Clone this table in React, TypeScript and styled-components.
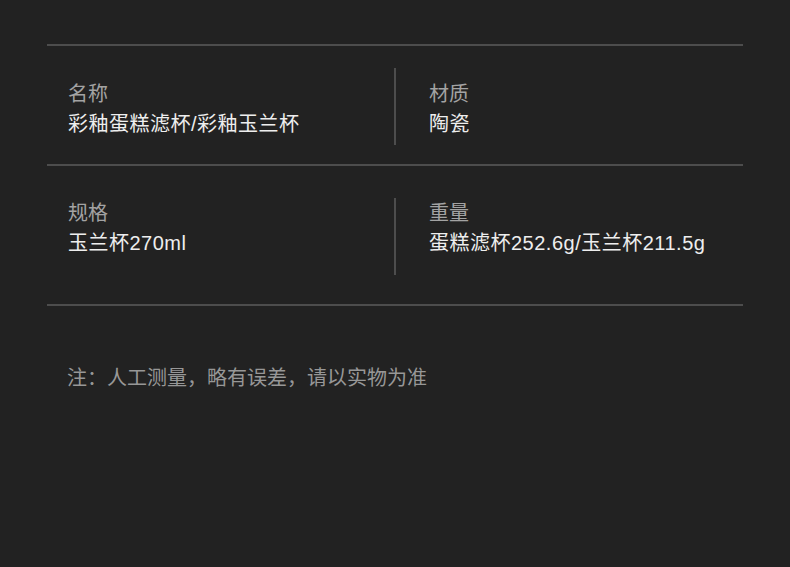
import React from "react";
import styled, { createGlobalStyle } from "styled-components";

interface SpecItem {
  label: string;
  value: string;
}

const rows: { items: SpecItem[]; top: number; bottom: number; inset: number }[] = [
  {
    items: [
      { label: "名称", value: "彩釉蛋糕滤杯/彩釉玉兰杯" },
      { label: "材质", value: "陶瓷" },
    ],
    top: 22,
    bottom: 19,
    inset: 11,
  },
  {
    items: [
      { label: "规格", value: "玉兰杯270ml" },
      { label: "重量", value: "蛋糕滤杯252.6g/玉兰杯211.5g" },
    ],
    top: 32,
    bottom: 29,
    inset: 0,
  },
];

export default function App() {
  return (
    <>
      <GlobalStyle />
      <StPage>
        <StTable>
          {rows.map((row, i) => (
            <StRow key={i} $top={row.top} $bottom={row.bottom}>
              {row.items.map((item, j) => (
                <StCell key={item.label} $divided={j > 0} $inset={row.inset}>
                  <StLabel>{item.label}</StLabel>
                  <StValue>{item.value}</StValue>
                </StCell>
              ))}
            </StRow>
          ))}
        </StTable>
        <StNote>注：人工测量，略有误差，请以实物为准</StNote>
      </StPage>
    </>
  );
}

const GlobalStyle = createGlobalStyle`
  html, body {
    margin: 0;
    padding: 0;
    background: #222222;
  }
  body {
    font-family: "Liberation Sans", "Noto Sans CJK SC", sans-serif;
  }
`;

const StPage = styled.div`
  width: 790px;
  height: 567px;
  box-sizing: border-box;
  padding: 44px 47px 0;
  background: #222222;
`;

const StTable = styled.div`
  border-top: 2px solid #4d4d4d;
`;

const StRow = styled.div<{ $top: number; $bottom: number }>`
  display: grid;
  grid-template-columns: 347px 1fr;
  padding: ${(p) => p.$top}px 0 ${(p) => p.$bottom}px;
  border-bottom: 2px solid #4d4d4d;
`;

const StCell = styled.div<{ $divided: boolean; $inset: number }>`
  display: flex;
  flex-direction: column;
  height: 77px;
  box-sizing: border-box;
  padding: ${(p) => p.$inset}px 0 0 ${(p) => (p.$divided ? 33 : 21)}px;
  border-left: ${(p) => (p.$divided ? "2px solid #4d4d4d" : "none")};
`;

const StLabel = styled.div`
  font-size: 20px;
  line-height: 30px;
  color: #a3a3a3;
  white-space: nowrap;
`;

const StValue = styled.div`
  font-size: 20px;
  line-height: 30px;
  letter-spacing: 0.5px;
  color: #eeeeee;
  white-space: nowrap;
`;

const StNote = styled.p`
  margin: 57px 0 0 20px;
  font-size: 20px;
  line-height: 30px;
  color: #979797;
`;
